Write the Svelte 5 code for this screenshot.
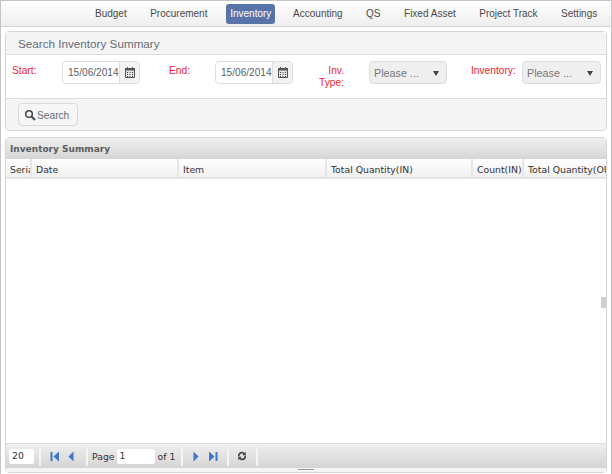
<script>
	const navItems = ['Budget', 'Procurement', 'Inventory', 'Accounting', 'QS', 'Fixed Asset', 'Project Track', 'Settings'];
	const columns = [
		{ title: 'Serial', width: 26 },
		{ title: 'Date', width: 147 },
		{ title: 'Item', width: 148 },
		{ title: 'Total Quantity(IN)', width: 146 },
		{ title: 'Count(IN)', width: 51 },
		{ title: 'Total Quantity(OUT)', width: 120 }
	];
</script>

{#snippet calendar()}
	<svg viewBox="0 0 12 13" width="12" height="13">
		<path d="M1.500 2.500h9v9h-9z" fill="#e4e4e4" stroke="#555" />
		<path d="M1 2h10v2.500H1z" fill="#555" />
		<path d="M3.500 1v2M8.500 1v2" stroke="#555" />
		<path d="M3 6.500h1M5.500 6.500h1M8 6.500h1M3 8.500h1M5.500 8.500h1M8 8.500h1M3 10.500h1M5.500 10.500h1M8 10.500h1" stroke="#444" />
	</svg>
{/snippet}

{#snippet dateInput(value)}
	<div class="date">
		<span class="date__value">{value}</span>
		<span class="date__btn">{@render calendar()}</span>
	</div>
{/snippet}

{#snippet select(cls)}
	<div class="select {cls}">
		<span>Please ...</span>
		<i class="select__arrow"></i>
	</div>
{/snippet}

<div class="frame">
	<nav class="nav">
		{#each navItems as item}
			<span class="nav__item" class:active={item === 'Inventory'}>{item}</span>
		{/each}
	</nav>

	<section class="panel search">
		<h2 class="search__title">Search Inventory Summary</h2>
		<div class="form">
			<span class="lbl lbl--start">Start:</span>
			{@render dateInput('15/06/2014')}
			<span class="lbl lbl--end">End:</span>
			{@render dateInput('15/06/2014')}
			<span class="lbl lbl--type">Inv.<br />Type:</span>
			{@render select('')}
			<span class="lbl lbl--inv">Inventory:</span>
			{@render select('select--wide')}
		</div>
		<div class="actions">
			<button type="button" class="btn">
				<svg viewBox="0 0 12 12" width="12" height="12">
					<circle cx="5" cy="5" r="3.300" fill="none" stroke="#3d4a55" stroke-width="1.500" />
					<path d="M7.500 7.500 11 11" stroke="#3d4a55" stroke-width="2" />
				</svg>
				Search
			</button>
		</div>
	</section>

	<section class="panel grid">
		<h3 class="grid__title">Inventory Summary</h3>
		<div class="thead">
			{#each columns as col}
				<div class="th" style="width: {col.width}px">{col.title}</div>
			{/each}
		</div>
		<div class="tbody">
			<span class="resizer"></span>
		</div>
		<div class="pager">
			<span class="pager__size">20</span>
			<i class="sep sep--size"></i>
			<svg class="pg pg--first" viewBox="0 0 10 11" width="10" height="11"><path d="M0.500 1h2v9h-2z M9 0.500v10L3.500 5.500z" fill="#3b78c9" /></svg>
			<svg class="pg pg--prev" viewBox="0 0 6 11" width="6" height="11"><path d="M5.500 0.500v10L0.500 5.500z" fill="#3b78c9" /></svg>
			<i class="sep sep--a"></i>
			<span class="pager__text">Page</span>
			<span class="pager__page">1</span>
			<span class="pager__text">of 1</span>
			<i class="sep sep--b"></i>
			<svg class="pg pg--next" viewBox="0 0 6 11" width="6" height="11"><path d="M0.500 0.500v10L5.500 5.500z" fill="#3b78c9" /></svg>
			<svg class="pg pg--last" viewBox="0 0 10 11" width="10" height="11"><path d="M7.500 1h2v9h-2z M1 0.500v10L6.500 5.500z" fill="#3b78c9" /></svg>
			<i class="sep sep--c"></i>
			<svg class="pg pg--refresh" viewBox="0 0 12 12" width="10" height="10">
				<path d="M2.200 6.500A3.800 3.800 0 0 1 9 3.500M9.800 5.500A3.800 3.800 0 0 1 3 8.500" fill="none" stroke="#444" stroke-width="2" />
				<path d="M10.500 1v4h-4zM1.500 11V7h4z" fill="#444" />
			</svg>
			<i class="sep sep--d"></i>
		</div>
		<div class="splitter"><span></span></div>
	</section>
</div>

<style>
	:global(body) {
		margin: 0;
		background: #fff;
	}
	.frame {
		box-sizing: border-box;
		width: 612px;
		height: 474px;
		border: solid #c4c4c4;
		border-width: 1px 1px 0 1px;
		font-family: "Liberation Sans", Arial, sans-serif;
		display: flex;
		flex-direction: column;
		overflow: hidden;
	}
	.nav {
		box-sizing: border-box;
		height: 26px;
		flex: none;
		display: flex;
		align-items: center;
		padding: 3px 0 3px 82.250px;
		background: linear-gradient(#ffffff, #eeeeee);
		border-bottom: 1px solid #d2d2d2;
		font-size: 10px;
		color: #4a4a4a;
	}
	.nav__item {
		padding: 0 11.750px;
		height: 20px;
		line-height: 20px;
		white-space: nowrap;
	}
	.nav__item.active {
		padding: 0 4px;
		margin: 0 6px 0 7px;
		background: #5873a8;
		border-radius: 3px;
		color: #fff;
	}
	.panel {
		margin: 0 4px;
		border: 1px solid #d5d5d5;
		border-radius: 4px;
		flex: none;
	}
	.search {
		margin-top: 4px;
		height: 100px;
		box-sizing: border-box;
		display: flex;
		flex-direction: column;
	}
	.search__title {
		margin: 0;
		height: 23px;
		flex: none;
		box-sizing: border-box;
		padding: 1px 0 0 12px;
		background: #f5f5f5;
		border-bottom: 1px solid #dcdcdc;
		font-size: 11.700px;
		font-weight: 400;
		line-height: 22px;
		color: #666c75;
	}
	.form {
		height: 44px;
		box-sizing: border-box;
		flex: none;
		display: flex;
		align-items: flex-start;
		padding: 6px 0 0 6px;
		border-bottom: 1px solid #dcdcdc;
		font-size: 10.200px;
	}
	.lbl {
		flex: none;
		box-sizing: border-box;
		color: #f01c30;
		line-height: 12px;
		padding-top: 4px;
	}
	.lbl--start { width: 50px; }
	.lbl--end { width: 46px; margin-left: 29px; }
	.lbl--type { width: 76px; text-align: right; padding-right: 25px; }
	.lbl--inv { width: 51px; margin-left: 24px; }
	.date, .select {
		box-sizing: border-box;
		flex: none;
		width: 78px;
		height: 23px;
		border: 1px solid #dedede;
		border-radius: 4px;
		display: flex;
		align-items: center;
		color: #5a5f6a;
	}
	.date {
		background: #fff;
		font-size: 10.100px;
	}
	.date__value {
		flex: 1;
		padding-left: 5px;
		white-space: nowrap;
	}
	.date__btn {
		width: 19px;
		align-self: stretch;
		display: flex;
		align-items: center;
		justify-content: center;
		background: #f2f2f2;
		border-left: 1px solid #dedede;
		border-radius: 0 3px 3px 0;
	}
	.select {
		background: #efefef;
		padding-left: 4px;
		font-size: 10.800px;
		color: #777;
		position: relative;
	}
	.select--wide {
		width: 79px;
	}
	.select__arrow {
		position: absolute;
		right: 7px;
		top: 9px;
		border: 3px solid transparent;
		border-top: 5px solid #444;
		border-bottom: 0;
	}
	.actions {
		flex: 1;
		background: #f5f5f5;
		padding: 4px 0 0 12px;
		border-radius: 0 0 4px 4px;
	}
	.btn {
		box-sizing: border-box;
		width: 60px;
		height: 23px;
		padding: 1px 0 0 5px;
		display: flex;
		align-items: center;
		gap: 1px;
		background: #f6f6f6;
		border: 1px solid #d9d9d9;
		border-radius: 4px;
		font: 10.200px "Liberation Sans", Arial, sans-serif;
		color: #666c75;
	}
	.grid {
		margin-top: 6px;
		flex: 1;
		display: flex;
		flex-direction: column;
		margin-bottom: 1px;
		min-height: 0;
	}
	.grid__title {
		margin: 0;
		height: 21px;
		flex: none;
		box-sizing: border-box;
		padding: 1px 0 0 4px;
		background: linear-gradient(#efefef, #d6d6d6);
		font: bold 9px/20px "DejaVu Sans", Verdana, sans-serif;
		color: #5d5d5d;
	}
	.thead {
		display: flex;
		height: 20px;
		flex: none;
		box-sizing: border-box;
		overflow: hidden;
		border-bottom: 2px solid #e6e6e6;
		background: linear-gradient(#ffffff, #f0f0f0);
		font: 9.300px/21px "DejaVu Sans", Verdana, sans-serif;
		color: #333;
	}
	.th {
		box-sizing: border-box;
		flex: none;
		padding-left: 4px;
		overflow: hidden;
		white-space: nowrap;
		border-right: 2px solid #e6e6e6;
	}
	.tbody {
		flex: 1;
		background: #fff;
		position: relative;
	}
	.resizer {
		position: absolute;
		right: 0;
		top: 118px;
		width: 5px;
		height: 11px;
		background: #d0d0c8;
	}
	.pager {
		height: 25px;
		flex: none;
		box-sizing: border-box;
		display: flex;
		align-items: center;
		padding-left: 3px;
		background: linear-gradient(#efefef, #d4d4d4);
		border-top: 1px solid #dcdcdc;
		font: 9.300px "DejaVu Sans", Verdana, sans-serif;
		color: #333;
	}
	.pager__size, .pager__page {
		box-sizing: border-box;
		height: 15px;
		line-height: 13px;
		padding-left: 3px;
		background: #fff;
		border-radius: 2px;
	}
	.pager__size { width: 25px; }
	.pager__page { width: 38px; margin: 0 3px 0 2px; }
	.sep {
		flex: none;
		width: 2px;
		height: 19px;
		background: #f4f4f4;
	}
	.sep--size { margin-left: 5px; }
	.sep--a { margin-left: 12px; margin-right: 4px; }
	.sep--b { margin-left: 6px; }
	.sep--c { margin-left: 9px; }
	.sep--d { margin-left: 9px; }
	.pg { flex: none; }
	.pg--first { margin-left: 9px; }
	.pg--prev { margin-left: 8px; }
	.pg--next { margin-left: 10px; }
	.pg--last { margin-left: 9px; }
	.pg--refresh { margin-left: 8px; }
	.splitter {
		height: 4px;
		flex: none;
		background: #f4f4f4;
		display: flex;
		justify-content: center;
	}
	.splitter span {
		width: 16px;
		height: 1px;
		margin-top: 1px;
		background: #999;
	}
</style>
